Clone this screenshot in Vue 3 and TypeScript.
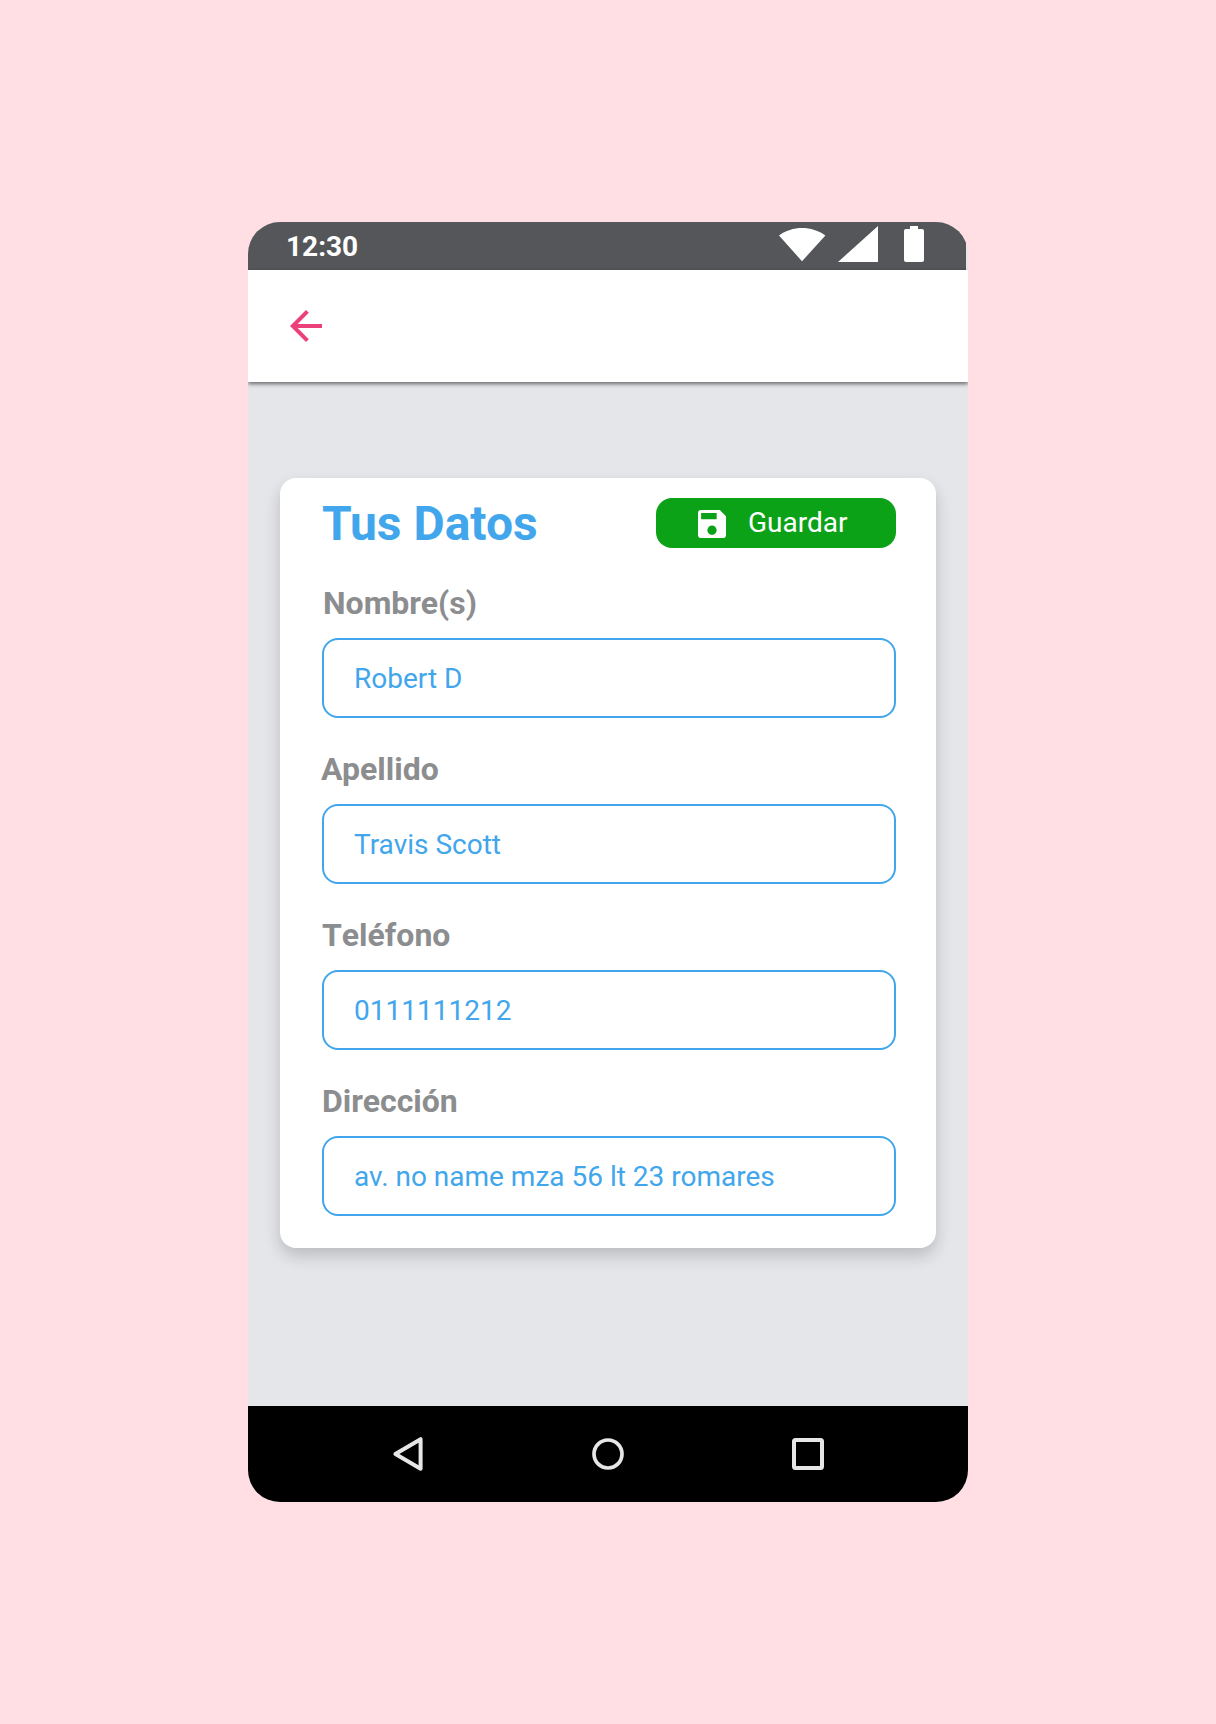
<script setup lang="ts">
interface Field {
  id: string
  label: string
  value: string
}

const fields: Field[] = [
  { id: 'nombre', label: 'Nombre(s)', value: 'Robert D' },
  { id: 'apellido', label: 'Apellido', value: 'Travis Scott' },
  { id: 'telefono', label: 'Teléfono', value: '0111111212' },
  { id: 'direccion', label: 'Dirección', value: 'av. no name mza 56 lt 23 romares' },
]
</script>

<template>
  <main class="stage">
    <div class="phone">
      <div class="status">
        <span class="time">12:30</span>
        <svg class="status-icons" width="146" height="48" viewBox="0 0 146 48" fill="#fff">
          <path d="M0 13.6C13 3.4 33 3.4 46.4 13.6L23 39.2Z" />
          <path d="M99 4v36H59Z" />
          <path d="M131 4h8v3h4a2 2 0 0 1 2 2v29a2 2 0 0 1-2 2h-16a2 2 0 0 1-2-2V9a2 2 0 0 1 2-2h4Z" />
        </svg>
      </div>
      <header class="bar">
        <button class="back" aria-label="Atrás">
          <svg width="48" height="48" viewBox="0 0 24 24" fill="#ec407a">
            <path d="M20 11H7.83l5.59-5.59L12 4l-8 8 8 8 1.41-1.41L7.83 13H20z" />
          </svg>
        </button>
      </header>
      <section class="content">
        <form class="card" @submit.prevent>
          <div class="head">
            <h1>Tus Datos</h1>
            <button class="save" type="submit">
              <svg width="28" height="28" viewBox="3 3 18 18" fill="#fff">
                <path d="M17 3H5a2 2 0 0 0-2 2v14a2 2 0 0 0 2 2h14a2 2 0 0 0 2-2V7zm-5 16a3 3 0 1 1 0-6 3 3 0 0 1 0 6zm3-10H5V5h10z" />
              </svg>
              <span>Guardar</span>
            </button>
          </div>
          <div v-for="f in fields" :key="f.id" class="field">
            <span class="label" :class="f.id">{{ f.label }}</span>
            <div class="input">{{ f.value }}</div>
          </div>
        </form>
      </section>
      <nav class="nav">
        <svg width="48" height="48" viewBox="0 0 48 48" fill="none" stroke="#e6e6e6" stroke-width="4" stroke-linejoin="round">
          <path d="M36.6 9.2v29.6L11.4 24Z" />
        </svg>
        <svg width="48" height="48" viewBox="0 0 48 48" fill="none" stroke="#e6e6e6" stroke-width="3.7">
          <circle cx="24" cy="24" r="14" />
        </svg>
        <svg width="48" height="48" viewBox="0 0 48 48" fill="none" stroke="#e6e6e6" stroke-width="4">
          <rect x="10" y="10" width="28" height="28" rx="1.5" />
        </svg>
      </nav>
    </div>
  </main>
</template>

<style>
body {
  margin: 0;
}
</style>

<style scoped>
.stage {
  box-sizing: border-box;
  height: 1724px;
  padding-top: 222px;
  background: #ffdee4;
  font-family: Roboto, sans-serif;
}
.phone {
  display: flex;
  flex-direction: column;
  width: 720px;
  height: 1280px;
  margin: 0 auto;
  overflow: hidden;
  border-radius: 32px;
  background: #e5e6ea;
}
.status {
  box-sizing: border-box;
  display: flex;
  align-items: center;
  justify-content: space-between;
  width: 718px;
  height: 48px;
  padding: 0 41px 0 38px;
  background: #55565a;
}
.time {
  padding-top: 2px;
  color: #fff;
  font-size: 28px;
  font-weight: 700;
  line-height: 48px;
}
.bar {
  z-index: 1;
  display: flex;
  align-items: center;
  height: 112px;
  padding-left: 34px;
  background: #fff;
  box-shadow: 0 2px 4px rgba(0, 0, 0, 0.55);
}
button {
  margin: 0;
  padding: 0;
  border: 0;
  background: none;
  font-family: inherit;
}
.back,
.back svg {
  display: block;
}
.content {
  flex: 1;
  padding: 96px 32px 0;
}
.card {
  box-sizing: border-box;
  height: 770px;
  padding: 20px 40px 0 42px;
  border-radius: 16px;
  background: #fff;
  box-shadow: 0 8px 16px rgba(0, 0, 0, 0.18);
}
.head {
  display: flex;
  align-items: center;
  justify-content: space-between;
  height: 50px;
}
h1 {
  margin: 0;
  padding-top: 2px;
  color: #41a6ec;
  font-size: 48px;
  font-weight: 700;
  line-height: 50px;
}
.save {
  display: flex;
  align-items: center;
  gap: 22px;
  width: 240px;
  height: 50px;
  padding-left: 42px;
  border-radius: 16px;
  background: #0ca218;
  color: #fff;
  font-size: 28px;
  line-height: 50px;
}
.save svg {
  margin-top: 2px;
}
.field {
  display: flex;
  flex-direction: column;
  gap: 16px;
  height: 134px;
  margin-top: 36px;
}
.field + .field {
  margin-top: 32px;
}
.label {
  color: #8c8d8f;
  font-size: 32px;
  font-weight: 700;
  line-height: 38px;
}
.label.nombre {
  margin-left: 1px;
}
.label.apellido {
  margin-left: -1px;
}
.label.telefono {
  font-kerning: none;
}
.input {
  box-sizing: border-box;
  height: 80px;
  padding-left: 30px;
  border: 2px solid #41a6ec;
  border-radius: 16px;
  color: #41a6ec;
  font-size: 28px;
  line-height: 78px;
}
.nav {
  display: flex;
  align-items: center;
  justify-content: center;
  gap: 152px;
  height: 96px;
  background: #000;
}
</style>
